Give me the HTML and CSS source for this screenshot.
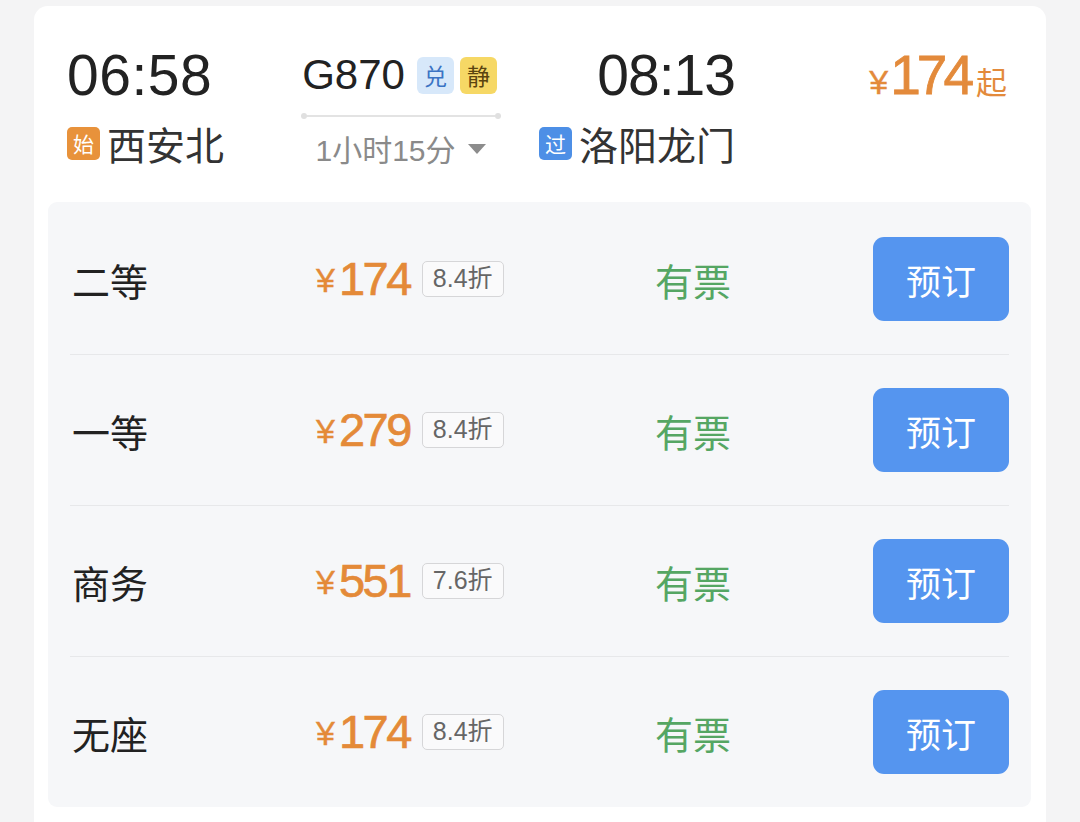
FILE: index.html
```html
<!DOCTYPE html>
<html lang="zh-CN">
<head>
<meta charset="utf-8">
<title>G870</title>
<link rel="stylesheet" href="styles.css">
</head>
<body>
<div class="card">
  <div class="header">
    <div class="col dep">
      <div class="time">06:58</div>
      <div class="station"><span class="tag tag-start">始</span><span class="name">西安北</span></div>
    </div>
    <div class="col train">
      <div class="train-row"><span class="train-no">G870</span><span class="mark mark-dui">兑</span><span class="mark mark-jing">静</span></div>
      <div class="track"><span class="dot"></span><span class="rail"></span><span class="dot"></span></div>
      <div class="duration">1小时15分<svg class="caret" width="20" height="12" viewBox="0 0 20 12"><polygon points="1,1 19,1 10,11" fill="#8c8c8c"/></svg></div>
    </div>
    <div class="col arr">
      <div class="time">08:13</div>
      <div class="station"><span class="tag tag-pass">过</span><span class="name">洛阳龙门</span></div>
    </div>
    <div class="col from-price">
      <span class="yen">¥</span><span class="num">174</span><span class="qi">起</span>
    </div>
  </div>
  <div class="panel">
    <div class="seat-row">
      <div class="seat">二等</div>
      <div class="price"><span class="p-yen">¥</span><span class="p-num">174</span><span class="disc">8.4折</span></div>
      <div class="status">有票</div>
      <button class="book">预订</button>
    </div>
    <div class="seat-row">
      <div class="seat">一等</div>
      <div class="price"><span class="p-yen">¥</span><span class="p-num">279</span><span class="disc">8.4折</span></div>
      <div class="status">有票</div>
      <button class="book">预订</button>
    </div>
    <div class="seat-row">
      <div class="seat">商务</div>
      <div class="price"><span class="p-yen">¥</span><span class="p-num">551</span><span class="disc">7.6折</span></div>
      <div class="status">有票</div>
      <button class="book">预订</button>
    </div>
    <div class="seat-row">
      <div class="seat">无座</div>
      <div class="price"><span class="p-yen">¥</span><span class="p-num">174</span><span class="disc">8.4折</span></div>
      <div class="status">有票</div>
      <button class="book">预订</button>
    </div>
  </div>
</div>
</body>
</html>
```

FILE: styles.css
```css
* { box-sizing: border-box; }
html, body {
  margin: 0;
  padding: 0;
  background: #f4f4f5;
  height: 822px;
  overflow: hidden;
}
body {
  font-family: "Liberation Sans", "Noto Sans CJK SC", sans-serif;
  color: #222;
}
.card {
  margin: 6px 0 0 34px;
  width: 1012px;
  height: 840px;
  background: #fff;
  border-radius: 14px;
  padding: 0 15px 0 14px;
}
.header {
  display: flex;
  padding: 39px 24px 0 19px;
  height: 196px;
}
.col { display: flex; flex-direction: column; }
.dep { width: 234px; align-items: flex-start; }
.arr { width: 234px; align-items: flex-end; }
.train { width: 200px; align-items: center; }
.time {
  font-size: 57px;
  line-height: 60px;
  height: 60px;
  color: #222;
  letter-spacing: 0.5px;
}
.arr .time { letter-spacing: -1px; }
.station {
  margin-top: 18px;
  height: 40px;
  display: flex;
  align-items: center;
}
.tag {
  width: 33px;
  height: 33px;
  border-radius: 5px;
  color: #fff;
  font-family: "Noto Sans CJK SC", sans-serif;
  font-size: 21px;
  line-height: 33px;
  text-align: center;
  margin-right: 7px;
}
.tag-start { background: #e8923b; }
.tag-pass { background: #4d8fe6; }
.name {
  font-family: "Noto Sans CJK SC", sans-serif;
  font-size: 39px;
  line-height: 40px;
  color: #333;
}
.train-row {
  height: 60px;
  display: flex;
  align-items: center;
}
.train-no {
  font-size: 42px;
  line-height: 60px;
  color: #222;
  margin-right: 12px;
  margin-left: -3px;
}
.mark {
  width: 37px;
  height: 37px;
  border-radius: 6px;
  font-family: "Noto Sans CJK SC", sans-serif;
  font-size: 23px;
  line-height: 37px;
  text-align: center;
  margin-right: 6px;
}
.mark:last-child { margin-right: 0; }
.mark-dui { background: #d7e8fa; color: #3a73c4; }
.mark-jing { background: #f6d865; color: #5a4410; }
.track {
  width: 200px;
  margin-top: 8px;
  display: flex;
  align-items: center;
}
.rail { flex: 1; height: 2px; background: #e3e3e3; }
.dot {
  width: 6px;
  height: 6px;
  border-radius: 50%;
  background: #e0e0e0;
}
.duration {
  margin-top: 9px;
  height: 40px;
  display: flex;
  align-items: center;
  font-family: "Liberation Sans", "Noto Sans CJK SC", sans-serif;
  font-size: 30px;
  color: #8a8a8a;
}
.caret { margin-left: 11px; margin-top: 2px; }
.from-price {
  flex: 1;
  flex-direction: row;
  justify-content: flex-end;
  align-items: baseline;
  height: 60px;
  line-height: 60px;
  color: #e38a3b;
}
.from-price .yen { font-size: 34px; margin-right: 2px; -webkit-text-stroke: 0.4px #e38a3b; }
.from-price .num { font-size: 55px; letter-spacing: -4px; margin-right: 6px; -webkit-text-stroke: 0.8px #e38a3b; }
.from-price .qi { font-family: "Noto Sans CJK SC", sans-serif; font-size: 31px; }

.panel {
  background: #f6f7f9;
  border-radius: 9px;
  padding: 2px 22px 0;
}
.seat-row {
  display: grid;
  grid-template-columns: 246px 339px 1fr 136px;
  align-items: center;
  height: 151px;
  border-bottom: 1.5px solid #e7e8ea;
}
.seat-row:last-child { border-bottom: none; height: 150px; }
.seat {
  font-family: "Noto Sans CJK SC", sans-serif;
  font-size: 38px;
  color: #222;
  padding-left: 2px;
}
.price {
  display: flex;
  align-items: center;
  color: #e48a38;
}
.p-yen { font-size: 34px; margin-right: 4px; margin-top: 2px; -webkit-text-stroke: 0.4px #e48a38; }
.p-num { font-size: 47px; letter-spacing: -2.5px; line-height: 50px; -webkit-text-stroke: 0.7px #e48a38; }
.disc {
  margin-left: 12px;
  height: 36px;
  padding: 0 10px;
  border: 1.5px solid #d6d6d8;
  border-radius: 5px;
  background: #fafafb;
  font-family: "Liberation Sans", "Noto Sans CJK SC", sans-serif;
  font-size: 25px;
  line-height: 33px;
  color: #666;
}
.status {
  font-family: "Noto Sans CJK SC", sans-serif;
  font-size: 38px;
  color: #55a663;
}
.book {
  width: 136px;
  height: 84px;
  border: none;
  border-radius: 11px;
  background: #5595ef;
  color: #fff;
  font-family: "Noto Sans CJK SC", sans-serif;
  font-size: 35px;
  padding: 0;
}
```
